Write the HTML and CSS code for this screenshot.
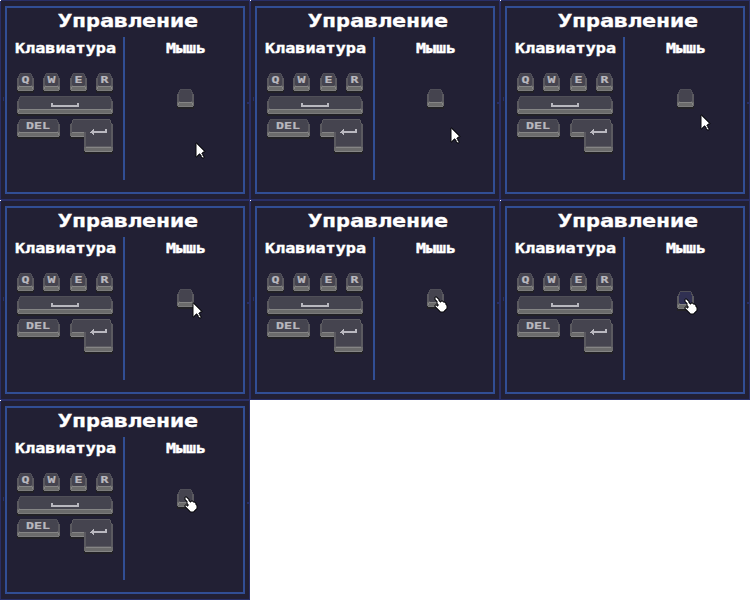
FILE: index.html
```html
<!DOCTYPE html>
<html lang="ru">
<head>
<meta charset="utf-8">
<title>Управление</title>
<link rel="stylesheet" href="styles.css">
</head>
<body>
<main class="sheet" id="sheet"></main>
<script src="app.js"></script>
</body>
</html>
```
FILE: styles.css
```css
* { box-sizing: border-box; }
body { margin: 0; background: #fff; }
.sheet { display: grid; grid-template-columns: repeat(3, 250px); grid-auto-rows: 200px; }
.card { position: relative; background: #222034; border: 1px solid #292f66; padding: 5px 4px; }
.card::before { content: ""; position: absolute; left: -1px; top: -1px; width: 1px; height: 1px; background: #fff; }
.panel { height: 188px; border: 2px solid #314e94; display: flex; flex-direction: column; }
.title { display: block; width: 236px; height: 29px; flex: none; }
.columns { display: grid; grid-template-columns: 116px 2px 118px; height: 143px; }
.divider { background: #314e94; }
.column svg { display: block; overflow: visible; }
.notch { position: absolute; top: 94px; }
.notch-left { left: -1px; }
.notch-right { right: -1px; }
.pointer { position: absolute; overflow: visible; }
text { font-family: "DejaVu Sans Mono", "Liberation Mono", monospace; font-weight: 700; fill: #fff; stroke: #fff; stroke-width: .35px; }
.label { fill: #b9b8bf; stroke: #b9b8bf; stroke-width: .2px; }
.title text { font-size: 17px; }
.heading text { font-size: 13.5px; }
.heading .label { font-size: 9.5px; }
```
FILE: app.js
```js
const rect = (x, y, w, h, fill) => `<rect x="${x}" y="${y}" width="${w}" height="${h}" fill="${fill}"/>`;

function key(x, y, w, top = '#45444f') {
  return rect(x, y + 15, w, 5, '#222126')
    + rect(x + 3, y, w - 6, 1, '#504f58')
    + rect(x + 2, y + 1, w - 4, 3, '#504f58')
    + rect(x + 1, y + 3, w - 2, 3, '#504f58')
    + rect(x, y + 5, w, 12, '#5b5a60')
    + rect(x + 1, y + 17, w - 2, 1, '#7b7b7b')
    + rect(x, y + 13, w, 4, '#6b6b6b')
    + rect(x + 3, y + 1, w - 6, 12, top)
    + rect(x + 2, y + 4, w - 4, 8, top)
    + rect(x + 2, y + 13, w - 4, 1, '#858585')
    + rect(x + 1, y + 14, 1, 2, '#858585')
    + rect(x + w - 2, y + 14, 1, 2, '#858585');
}

const label = (s, x, y, w) =>
  `<text class="label" x="${x}" y="${y}" textLength="${w}" lengthAdjust="spacingAndGlyphs">${s}</text>`;

const enter = `
  <path d="M70 134h14v15h29v5H84v-15H70z" fill="#222126"/>
  <path d="M73 119h37v1h1v3h1v1h1v27h-1v1H85v-1h-1v-14H71v-1h-1v-12h1v-1h1v-3h1z" fill="#5b5a60"/>
  <path d="M73 120h37v3h1v23H86v-14H72v-9h1z" fill="#45444f"/>
  <path d="M70 133h14v4H71v-1h-1zM84 147h29v4h-1v1H85v-1h-1z" fill="#6b6b6b"/>
  <path d="M72 132h12v1H72zM71 136h13v1H71zM86 147h25v1H86zM85 151h27v1H85z" fill="#858585"/>
  <path d="M90 132h1v-1h1v-1h1v-1h1v2h11v-2h2v4H94v2h-1v-1h-1v-1h-2z" fill="#b9b8bf"/>`;

const keyboard = key(17, 73, 17) + key(43, 73, 17) + key(70, 73, 17) + key(96, 73, 17)
  + key(17, 96, 96) + key(17, 119, 43) + enter
  + label('Q', 21.5, 83, 8) + label('W', 47.5, 83, 8)
  + label('E', 74.5, 83, 8) + label('R', 100.5, 83, 8)
  + label('DEL', 26, 129, 24)
  + '<path d="M51 103h2v2h24v-2h2v4H51z" fill="#b9b8bf"/>';

const arrow = `
  <path d="M0 0h1v1h1v1h1v1h1v1h1v1h1v1h1v1h1v1h1v1H7v1H6v1h1v2h1v2H6v-1H5v-2H4v-1H3v1H2v1H1v1H0z" fill="#fff" stroke="#08080c" stroke-width="1"/>`;

const hand = `
  <path d="M1 0h1v1h1v1h1v2h1v1h1V4h2v1h2v1h1v2h1v4h-1v1h-1v1H9v1H5v-1H4v-1H3v-1H2v-1H1v-1H0V8h2v1h1V7H2V4H1V3H0V0z" fill="#fff" stroke="#08080c" stroke-width="1"/>`;

const frames = [
  { x: 195, y: 142, shape: arrow },
  { x: 200, y: 127, shape: arrow },
  { x: 200, y: 114, shape: arrow },
  { x: 192, y: 102, shape: arrow },
  { x: 184, y: 96, shape: hand },
  { x: 184, y: 98, shape: hand, top: '#303052', drop: 2 },
  { x: 184, y: 96, shape: hand }
];

document.getElementById('sheet').innerHTML = frames.map(f => `
<section class="card">
  <div class="panel">
    <svg class="title" viewBox="7 8 236 29"><text x="58" y="27" textLength="140" lengthAdjust="spacingAndGlyphs">Управление</text></svg>
    <div class="columns">
      <div class="column"><svg class="heading" width="116" height="143" viewBox="7 37 116 143" shape-rendering="crispEdges"><text x="15" y="53" textLength="101" lengthAdjust="spacingAndGlyphs">Клавиатура</text>${keyboard}</svg></div>
      <div class="divider"></div>
      <div class="column"><svg class="heading" width="118" height="143" viewBox="125 37 118 143" shape-rendering="crispEdges"><text x="166" y="53" textLength="40" lengthAdjust="spacingAndGlyphs">Мышь</text>${key(177, 89 + (f.drop || 0), 17, f.top)}</svg></div>
    </div>
  </div>
  <svg class="notch notch-left" width="4" height="10"><path d="M0 6h1v3H0zM3 2h1v4H3z" fill="#292f66"/></svg>
  <svg class="notch notch-right" width="3" height="10"><path d="M0 7h3v2H0z" fill="#292f66"/></svg>
  <svg class="pointer" style="left:${f.x - 0.5}px;top:${f.y - 0.5}px" width="12" height="17">${f.shape}</svg>
</section>`).join('');
```
